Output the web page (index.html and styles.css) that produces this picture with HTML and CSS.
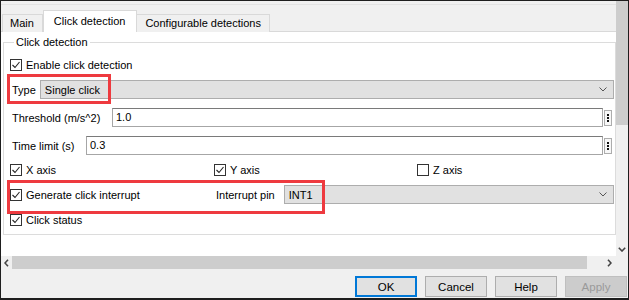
FILE: index.html
```html
<!DOCTYPE html>
<html lang="en">
<head>
    <meta charset="UTF-8">
    <title>Click detection</title>
    <link rel="stylesheet" href="styles.css">
</head>
<body>
    <div class="window">
        <div class="main">
            <div class="view">
                <div class="tabbar">
                    <div class="tab">Main</div>
                    <div class="tab active">Click detection</div>
                    <div class="tab">Configurable detections</div>
                </div>

                <div class="panel">
                    <fieldset class="group">
                        <legend>Click detection</legend>

                        <div class="check-row">
                            <svg class="checkbox" viewBox="0 0 12 12"><rect x="0.5" y="0.5" width="11" height="11"/><polyline points="2.5,6 5,8.5 9.5,3"/></svg>
                            <span>Enable click detection</span>
                        </div>

                        <div class="field-row">
                            <span class="label">Type</span>
                            <div class="combo">
                                <span>Single click</span>
                                <svg class="chevron" viewBox="0 0 8 5"><polyline points="0.5,0.5 4,4 7.5,0.5"/></svg>
                            </div>
                        </div>

                        <div class="field-row spin-row">
                            <span class="label threshold">Threshold (m/s^2)</span>
                            <div class="textbox">1.0</div>
                            <div class="spin"><i></i><i></i><i></i></div>
                        </div>

                        <div class="field-row spin-row">
                            <span class="label time">Time limit (s)</span>
                            <div class="textbox">0.3</div>
                            <div class="spin"><i></i><i></i><i></i></div>
                        </div>

                        <div class="grid-row">
                            <div class="check-row">
                                <svg class="checkbox" viewBox="0 0 12 12"><rect x="0.5" y="0.5" width="11" height="11"/><polyline points="2.5,6 5,8.5 9.5,3"/></svg>
                                <span>X axis</span>
                            </div>
                            <div class="check-row">
                                <svg class="checkbox" viewBox="0 0 12 12"><rect x="0.5" y="0.5" width="11" height="11"/><polyline points="2.5,6 5,8.5 9.5,3"/></svg>
                                <span>Y axis</span>
                            </div>
                            <div class="check-row">
                                <svg class="checkbox" viewBox="0 0 12 12"><rect x="0.5" y="0.5" width="11" height="11"/></svg>
                                <span>Z axis</span>
                            </div>
                        </div>

                        <div class="grid-row interrupt-row">
                            <div class="check-row">
                                <svg class="checkbox" viewBox="0 0 12 12"><rect x="0.5" y="0.5" width="11" height="11"/><polyline points="2.5,6 5,8.5 9.5,3"/></svg>
                                <span>Generate click interrupt</span>
                            </div>
                            <div class="field-row pin">
                                <span class="label">Interrupt pin</span>
                                <div class="combo">
                                    <span>INT1</span>
                                    <svg class="chevron" viewBox="0 0 8 5"><polyline points="0.5,0.5 4,4 7.5,0.5"/></svg>
                                </div>
                            </div>
                        </div>

                        <div class="check-row status-row">
                            <svg class="checkbox" viewBox="0 0 12 12"><rect x="0.5" y="0.5" width="11" height="11"/><polyline points="2.5,6 5,8.5 9.5,3"/></svg>
                            <span>Click status</span>
                        </div>
                    </fieldset>
                </div>
            </div>

            <div class="vscroll">
                <div class="vthumb"></div>
                <div class="vtrack"></div>
                <div class="varrow">
                    <svg viewBox="0 0 8 5"><polyline points="0.8,0.8 4,4 7.2,0.8"/></svg>
                </div>
            </div>
        </div>

        <div class="hscroll">
            <div class="harrow">
                <svg viewBox="0 0 5 8"><polyline points="4,0.8 1,4 4,7.2"/></svg>
            </div>
            <div class="hthumb"></div>
            <div class="htrack"></div>
            <div class="harrow">
                <svg viewBox="0 0 5 8"><polyline points="1,0.8 4,4 1,7.2"/></svg>
            </div>
            <div class="corner"></div>
        </div>

        <div class="buttons">
            <button class="btn default">OK</button>
            <button class="btn">Cancel</button>
            <button class="btn">Help</button>
            <button class="btn" disabled>Apply</button>
        </div>

        <!-- red annotation frames -->
        <div class="mark mark-type"></div>
        <div class="mark mark-interrupt"></div>
    </div>
</body>
</html>
```

FILE: styles.css
```css
* {
    margin: 0;
    padding: 0;
    box-sizing: border-box;
}

body {
    font-family: "Segoe UI", "Liberation Sans", Arial, sans-serif;
    font-size: 11px;
    color: #000;
    background: #fff;
}

.window {
    position: relative;
    width: 629px;
    height: 300px;
    border: 1px solid #1e1e1e;
    border-bottom-width: 2px;
    background: #f0f0f0;
    display: grid;
    grid-template-rows: 255px 13px 29px;
}

.main {
    display: grid;
    grid-template-columns: 615px 12px;
    min-height: 0;
}

.view {
    display: flex;
    flex-direction: column;
    padding-top: 3px;
    min-height: 0;
}

/* tabs */
.tabbar {
    height: 28px;
    border-top: 1px solid #e3e3e3;
    border-bottom: 1px solid #d9d9d9;
    padding-left: 1px;
    display: flex;
    align-items: flex-end;
}

.tab {
    height: 18px;
    line-height: 17px;
    padding: 0 8px 0 7px;
    border: 1px solid #d9d9d9;
    border-bottom: none;
    margin-bottom: -1px;
    background: #f0f0f0;
    white-space: nowrap;
}

.tab + .tab {
    border-left: none;
}

.tab.active {
    height: 22px;
    line-height: 20px;
    padding: 0 11px 0 10px;
    background: #fff;
    border-left: 1px solid #d9d9d9;
}

.tab.active + .tab {
    border-left: none;
    padding-left: 8px;
}

.panel {
    flex: 1;
    background: #fff;
    padding: 2px 0 0 2px;
}

/* group box */
.group {
    border: 1px solid #dcdcdc;
    padding: 0 1px 5px 6px;
    min-width: 0;
    display: flex;
    flex-direction: column;
    gap: 6px;
}

.group legend {
    margin-left: 4px;
    padding: 0 2px;
    line-height: 16px;
}

.check-row {
    height: 18px;
    display: flex;
    align-items: center;
    gap: 4px;
    white-space: nowrap;
}

.group > .check-row:first-of-type {
    margin-top: 6px;
}

.checkbox {
    width: 12px;
    height: 12px;
    flex: none;
}

.checkbox rect {
    fill: #fff;
    stroke: #333;
    stroke-width: 1;
}

.checkbox polyline {
    fill: none;
    stroke: #222;
    stroke-width: 1.1;
}

.field-row {
    height: 19px;
    display: flex;
    align-items: center;
    gap: 4px;
    white-space: nowrap;
}

.label {
    padding-left: 2px;
}

.label.threshold {
    width: 96px;
}

.label.time {
    width: 70px;
}

.combo {
    flex: 1;
    height: 19px;
    background: #e1e1e1;
    border: 1px solid #adadad;
    display: flex;
    align-items: center;
    justify-content: space-between;
    padding: 0 6px 0 4px;
}

.chevron {
    width: 8px;
    height: 5px;
}

.chevron polyline,
.varrow polyline,
.harrow polyline {
    fill: none;
    stroke: #555;
    stroke-width: 1;
}

.spin-row {
    margin-top: 3px;
    padding-right: 2px;
    gap: 6px;
}

.textbox {
    flex: 1;
    height: 19px;
    border: 1px solid #a6a6a6;
    border-top-color: #7a7a7a;
    padding-left: 3px;
    line-height: 16px;
    margin-right: -5px;
}

.spin {
    width: 8px;
    height: 16px;
    border: 1px solid #adadad;
    background: #f7f7f7;
    display: flex;
    flex-direction: column;
    align-items: center;
    justify-content: center;
    gap: 1px;
}

.spin i {
    width: 2px;
    height: 2px;
    background: #111;
}

.grid-row {
    display: grid;
    grid-template-columns: 204px 203px 1fr;
}

.interrupt-row {
    height: 19px;
    align-items: center;
}

.interrupt-row .pin {
    grid-column: 2 / 4;
    gap: 8px;
}

.pin .combo {
    margin-left: 1px;
}

.status-row {
    margin-top: 1px;
}

/* scrollbars */
.vscroll {
    display: flex;
    flex-direction: column;
}

.vthumb {
    height: 124px;
    background: #cdcdcd;
}

.vtrack {
    flex: 1;
    background: #f0f0f0;
}

.varrow {
    height: 13px;
    display: flex;
    align-items: center;
    justify-content: center;
}

.varrow svg {
    width: 8px;
    height: 5px;
}

.varrow polyline,
.harrow polyline {
    stroke: #444;
    stroke-width: 1.6;
}

.hscroll {
    display: flex;
}

.harrow {
    width: 11px;
    display: flex;
    align-items: center;
    justify-content: center;
}

.harrow svg {
    width: 5px;
    height: 8px;
}

.hthumb {
    width: 575px;
    background: #cdcdcd;
}

.htrack {
    width: 17px;
}

.corner {
    flex: 1;
}

/* dialog buttons */
.buttons {
    display: flex;
    justify-content: flex-end;
    align-items: flex-start;
    gap: 8px;
    padding: 7px 1px 0 0;
}

.btn {
    width: 62px;
    height: 21px;
    font: inherit;
    font-size: 11.5px;
    color: #000;
    background: #e1e1e1;
    border: 1px solid #adadad;
}

.btn.default {
    border-color: #0078d7;
    box-shadow: inset 0 0 0 1px #0078d7;
}

.btn:disabled {
    background: #cccccc;
    border-color: #bfbfbf;
    color: #9a9a9a;
}

.mark {
    position: absolute;
    border: 3px solid #ee3a3f;
}

.mark-type {
    left: 6px;
    top: 73px;
    width: 104px;
    height: 30px;
}

.mark-interrupt {
    left: 6px;
    top: 179px;
    width: 318px;
    height: 34px;
}
```
